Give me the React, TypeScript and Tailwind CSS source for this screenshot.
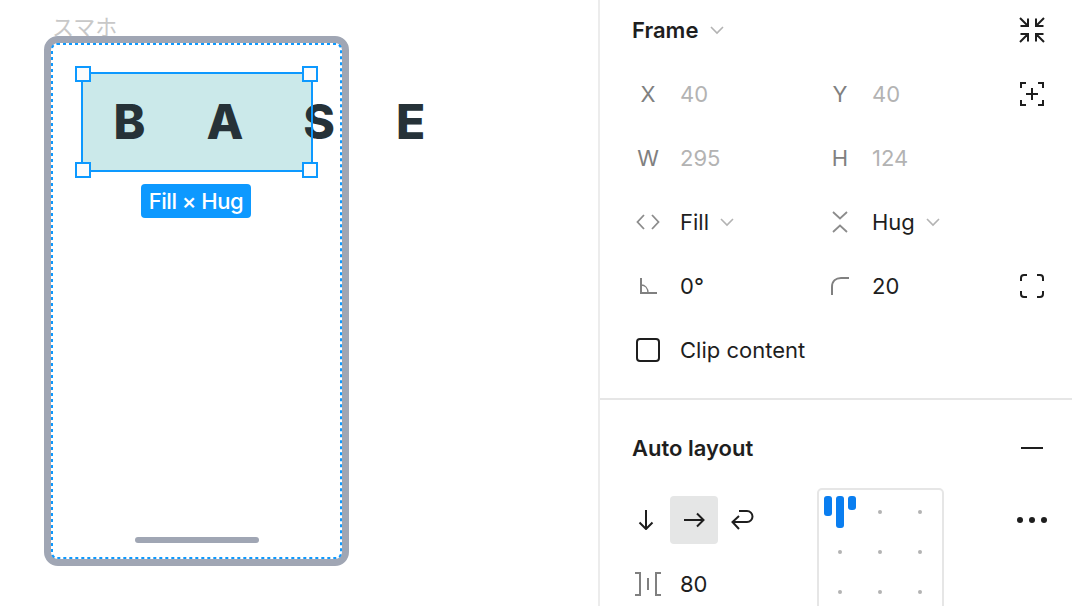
import React from "react";

const Chevron = () => (
  <svg width="14" height="14" viewBox="0 0 14 14" fill="none" stroke="#b3b3b3" strokeWidth="1.6">
    <path d="M1 4l6 6 6-6" />
  </svg>
);

const Handle = ({ pos }: { pos: string }) => (
  <div className={`absolute h-4 w-4 border-2 border-[#0d99ff] bg-[#fcfcfc] ${pos}`} />
);

const Field = ({ icon, value, muted, chevron }: { icon: React.ReactNode; value: string; muted?: boolean; chevron?: boolean }) => (
  <div className="flex h-16 items-center">
    <div className="flex w-8 items-center justify-center text-[22px] text-[#808080]">{icon}</div>
    <span className={`ml-4 text-[22px] ${muted ? "text-[#b3b3b3]" : "text-[#1e1e1e]"}`}>{value}</span>
    {chevron && (
      <span className="ml-[11px] flex">
        <Chevron />
      </span>
    )}
  </div>
);

const Dot = () => <div className="h-1 w-1 rounded-full bg-[#b3b3b3]" />;

export default function App() {
  return (
    <div className="flex h-[606px] w-[1072px] overflow-hidden bg-white font-['Inter',sans-serif]">
      {/* Canvas */}
      <div className="h-full w-[598px] shrink-0 pl-[44px]">
        <div className="h-9 pl-[8px] pt-[13px] font-['Inter','Noto_Sans_CJK_JP',sans-serif] text-[22px] leading-[28px] text-[#c8c8c8]">
          スマホ
        </div>
        <div className="relative z-10 h-[530px] w-[305px] rounded-[14px] border-[7px] border-[#a0a6b4] bg-white">
          <div className="flex h-full w-full flex-col items-center pt-[29px]">
            <div className="relative h-[100px] w-[232px] shrink-0 bg-[#cbe9ea]">
              <div className="whitespace-nowrap pl-[33px] pt-[21px] text-[48px] font-extrabold leading-[58px] tracking-[61px] text-[#263238]">
                BASE
              </div>
              <div className="absolute inset-0 border-2 border-[#0d99ff]" />
              <Handle pos="-left-[6px] -top-[6px]" />
              <Handle pos="-right-[5px] -top-[6px]" />
              <Handle pos="-left-[6px] -bottom-[6px]" />
              <Handle pos="-right-[5px] -bottom-[6px]" />
            </div>
            <div className="mr-px mt-3 flex h-[34px] items-center rounded bg-[#0d99ff] px-2 text-[22px] font-medium tracking-[-0.5px] text-white">
              Fill × Hug
            </div>
            <div className="mt-auto mb-[16px] h-1.5 w-[124px] rounded-full bg-[#a0a6b4]" />
          </div>
          <svg className="absolute inset-0" width="291" height="516" viewBox="0 0 291 516" fill="none">
            <rect x="1" y="1" width="289" height="514" rx="5" stroke="#0d99ff" strokeWidth="2" strokeDasharray="3 3" />
          </svg>
        </div>
      </div>

      {/* Properties panel */}
      <div className="flex h-full flex-1 flex-col border-l-2 border-[#ececec]">
        <div className="h-[400px] shrink-0 border-b-2 border-[#e6e6e6] pl-8 pr-6">
          <div className="grid grid-cols-[192px_192px_32px]">
            <div className="col-span-2 flex h-[62px] items-center pb-[2px]">
              <span className="text-[22px] font-semibold text-[#1e1e1e]">Frame</span>
              <span className="ml-3 flex">
                <Chevron />
              </span>
            </div>
            <div className="flex h-[62px] items-center justify-center pb-[2px]">
              <svg width="26" height="26" viewBox="0 0 26 26" fill="none" stroke="#1e1e1e" strokeWidth="2">
                <path d="M1 1l8 8M1.5 9H9V1.5M25 1l-8 8M24.5 9H17V1.5M1 25l8-8M1.5 17H9v7.5M25 25l-8-8M24.5 17H17v7.5" />
              </svg>
            </div>

            <Field icon="X" value="40" muted />
            <Field icon="Y" value="40" muted />
            <div className="flex h-16 items-center justify-center">
              <svg width="24" height="24" viewBox="0 0 24 24" fill="none" stroke="#1e1e1e" strokeWidth="2">
                <path d="M1 6V1h5M18 1h5v5M1 18v5h5M18 23h5v-5M12 6v12M6 12h12" />
              </svg>
            </div>

            <Field icon="W" value="295" muted />
            <Field icon="H" value="124" muted />
            <div />

            <Field
              icon={
                <svg width="24" height="16" viewBox="0 0 24 16" fill="none" stroke="#8c8c8c" strokeWidth="1.8">
                  <path d="M8 1L1.5 8 8 15M16 1l6.5 7-6.5 7" />
                </svg>
              }
              value="Fill"
              chevron
            />
            <Field
              icon={
                <svg width="16" height="22" viewBox="0 0 16 22" fill="none" stroke="#8c8c8c" strokeWidth="1.8">
                  <path d="M1 1l7 6.5L15 1M1 21l7-6.5 7 6.5" />
                </svg>
              }
              value="Hug"
              chevron
            />
            <div />

            <Field
              icon={
                <svg width="18" height="18" viewBox="0 0 18 18" fill="none" stroke="#808080" strokeWidth="2">
                  <path d="M2 1v15h16" />
                  <path d="M2 8c4 0 7 3 7 8" strokeWidth="1.4" />
                </svg>
              }
              value="0°"
            />
            <Field
              icon={
                <svg width="20" height="20" viewBox="0 0 20 20" fill="none" stroke="#808080" strokeWidth="2">
                  <path d="M2 19V11C2 5 6 2 11 2h8" />
                </svg>
              }
              value="20"
            />
            <div className="flex h-16 items-center justify-center">
              <svg width="24" height="24" viewBox="0 0 24 24" fill="none" stroke="#1e1e1e" strokeWidth="2">
                <path d="M1 7V4a3 3 0 0 1 3-3h3M17 1h3a3 3 0 0 1 3 3v3M1 17v3a3 3 0 0 0 3 3h3M17 23h3a3 3 0 0 0 3-3v-3" />
              </svg>
            </div>

            <div className="col-span-3 flex h-16 items-center">
              <div className="flex w-8 justify-center">
                <div className="h-6 w-6 rounded border-2 border-[#1e1e1e]" />
              </div>
              <span className="ml-4 text-[22px] text-[#1e1e1e]">Clip content</span>
            </div>
          </div>
        </div>

        <div className="flex-1 pl-8 pr-6">
          <div className="flex h-[96px] items-center justify-between">
            <span className="text-[22px] font-semibold text-[#1e1e1e]">Auto layout</span>
            <div className="flex w-8 justify-center">
              <div className="h-0.5 w-[22px] bg-[#1e1e1e]" />
            </div>
          </div>
          <div className="flex">
            <div className="w-[185px] shrink-0">
              <div className="flex h-12 items-center">
                <div className="flex h-12 w-[38px] items-center justify-center pr-[10px]">
                  <svg width="16" height="20" viewBox="0 0 16 20" fill="none" stroke="#1e1e1e" strokeWidth="2">
                    <path d="M8 0v18M1.5 12.5L8 19l6.5-6.5" />
                  </svg>
                </div>
                <div className="flex h-12 w-12 items-center justify-center rounded bg-[#e5e6e6]">
                  <svg width="22" height="16" viewBox="0 0 22 16" fill="none" stroke="#1e1e1e" strokeWidth="2">
                    <path d="M1 8h19M14 1.5L20.5 8 14 14.5" />
                  </svg>
                </div>
                <div className="ml-[13px] flex">
                  <svg width="23" height="21" viewBox="0 0 23 21" fill="none" stroke="#1e1e1e" strokeWidth="2">
                    <path d="M8 1h8a5.5 5.5 0 0 1 0 11H2M8 6L1.5 12 8 19" />
                  </svg>
                </div>
              </div>
              <div className="mt-2">
                <Field
                  icon={
                    <svg width="26" height="24" viewBox="0 0 26 24" fill="none" stroke="#808080" strokeWidth="2">
                      <path d="M0 1h5v22H0M26 1h-5v22h5" />
                      <path d="M13 6v12" />
                    </svg>
                  }
                  value="80"
                />
              </div>
            </div>
            <div className="-mt-2 h-[140px] w-[127px] shrink-0 rounded-[5px] border-2 border-[#e6e6e6] pl-[1px] pt-[2px]">
              <div className="grid grid-cols-[40px_40px_40px] grid-rows-[40px_40px_40px]">
                <div className="flex justify-center gap-1 pt-1">
                  <div className="h-5 w-2 rounded-[3px] bg-[#0a7ef0]" />
                  <div className="h-8 w-2 rounded-[3px] bg-[#0a7ef0]" />
                  <div className="h-[14px] w-2 rounded-[3px] bg-[#0a7ef0]" />
                </div>
                {Array.from({ length: 8 }).map((_, i) => (
                  <div key={i} className="flex items-center justify-center">
                    <Dot />
                  </div>
                ))}
              </div>
            </div>
            <div className="ml-[72px] flex h-12 w-8 items-center justify-center gap-1.5">
              <div className="h-1.5 w-1.5 shrink-0 rounded-full bg-[#1e1e1e]" />
              <div className="h-1.5 w-1.5 shrink-0 rounded-full bg-[#1e1e1e]" />
              <div className="h-1.5 w-1.5 shrink-0 rounded-full bg-[#1e1e1e]" />
            </div>
          </div>
        </div>
      </div>
    </div>
  );
}
